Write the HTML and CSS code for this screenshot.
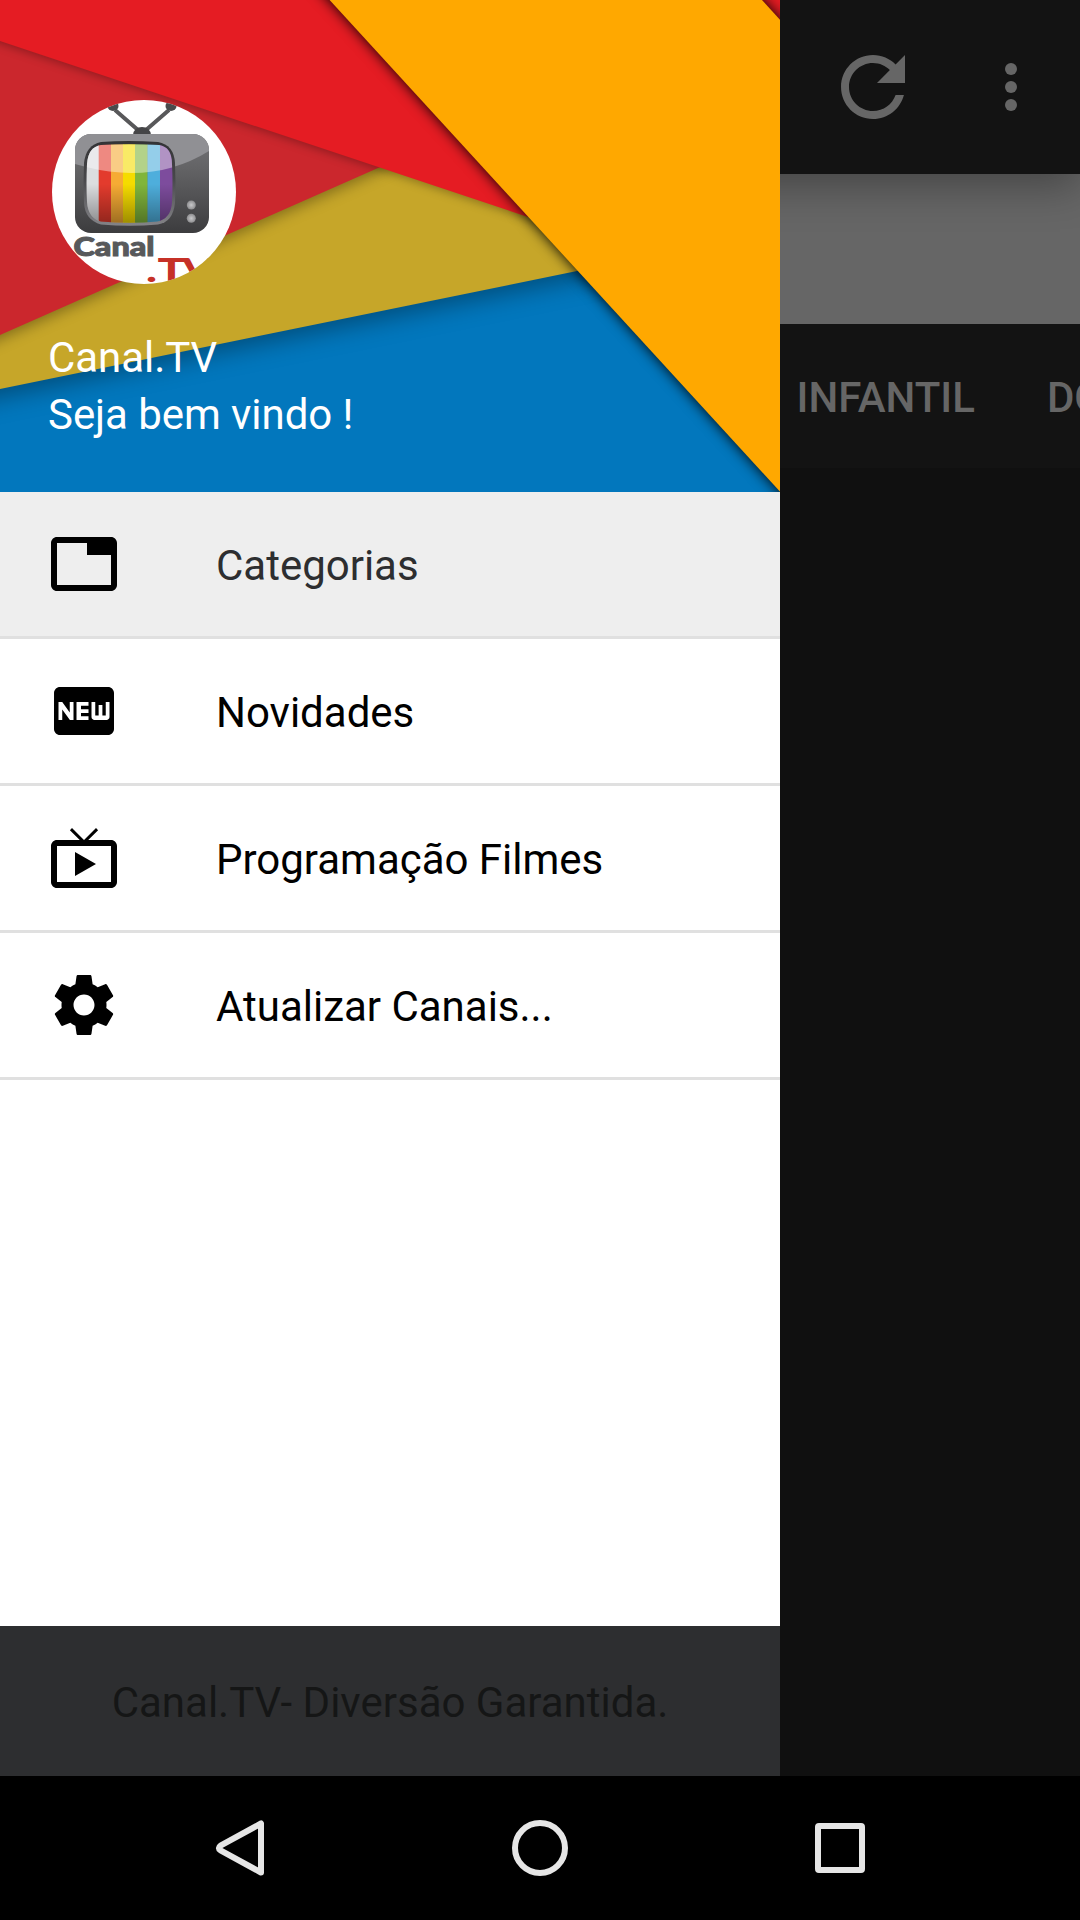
FILE: index.html
```html
<!DOCTYPE html>
<html lang="pt-BR">
<head>
<meta charset="utf-8">
<title>Canal.TV</title>
<link rel="stylesheet" href="styles.css">
</head>
<body>
<div class="screen">
  <div class="app">
    <nav class="drawer">
      <header class="drawer-header">
        <svg class="cover" viewBox="0 0 780 492" aria-hidden="true">
          <rect width="780" height="492" fill="#0277bd"/>
          <polygon class="fold-gold" points="-100,100 680,100 680,250 577,271 0,389 -100,409.5" fill="#c6a629"/>
          <polygon class="fold-crimson" points="-100,-100 600,-100 600,70 378,168 0,335 -100,379" fill="#cb272d"/>
          <polygon class="fold-red" points="-100,-100 900,-100 900,341 528,217 0,41 -100,8" fill="#e51c23"/>
          <polygon class="fold-orange" points="238,-100 671,-100 762,0 872,121 872,592" fill="#ffa800"/>
        </svg>
        <svg class="logo" viewBox="52 100 184 184" aria-hidden="true">
          <defs>
            <clipPath id="disc"><circle cx="144" cy="192" r="92"/></clipPath>
            <clipPath id="shell"><rect x="75" y="134" width="134" height="99" rx="16"/></clipPath>
            <clipPath id="glass"><path d="M101 145Q128 143.500 159 145Q172 147 172 164Q173 183 172 202Q171 219 157 221.500Q130 224 101 221.500Q88 218 87 202Q86 183 87 164Q88 147 101 145Z"/></clipPath>
            <linearGradient id="shellFill" x1="0" y1="0" x2="0" y2="1">
              <stop offset="0" stop-color="#747477"/><stop offset=".35" stop-color="#636365"/><stop offset="1" stop-color="#3c3c3e"/>
            </linearGradient>
            <linearGradient id="rim" x1="0" y1="0" x2="0" y2="1">
              <stop offset="0" stop-color="#333335"/><stop offset=".45" stop-color="#48484b"/><stop offset="1" stop-color="#848488"/>
            </linearGradient>
            <linearGradient id="shade" x1="0" y1="0" x2="0" y2="1">
              <stop offset=".5" stop-color="#000" stop-opacity="0"/><stop offset="1" stop-color="#000" stop-opacity=".38"/>
            </linearGradient>
            <radialGradient id="knob"><stop offset="0" stop-color="#c9c9cb"/><stop offset="1" stop-color="#8e8e90"/></radialGradient>
          </defs>
          <g clip-path="url(#disc)">
            <rect x="52" y="100" width="184" height="184" fill="#fff"/>
            <path d="M115 110L138 130M169 110L146 130" stroke="#58585a" stroke-width="4"/>
            <ellipse cx="113" cy="106" rx="5.500" ry="5" fill="#4a4a4c"/>
            <ellipse cx="171" cy="106" rx="5.500" ry="5" fill="#4a4a4c"/>
            <path d="M133 135Q134 127 142 127Q150 127 151 135Z" fill="#454547"/>
            <g clip-path="url(#shell)">
              <rect x="75" y="134" width="134" height="99" fill="url(#shellFill)"/>
              <path d="M75 134H209V151Q151 187 75 164Z" fill="#909094"/>
            </g>
            <path d="M101 142Q128 140 158 142Q174 145 175 163Q176 183 175 203Q173 222 158 224.500Q130 227 101 224.500Q85 220 84 203Q83 183 84 163Q86 145 101 142Z" fill="url(#rim)"/>
            <g clip-path="url(#glass)">
              <rect x="85" y="142" width="14" height="84" fill="#dcdddf"/>
              <rect x="98.700" y="142" width="12.500" height="84" fill="#e33b2d"/>
              <rect x="111" y="142" width="12.300" height="84" fill="#f6ab34"/>
              <rect x="123" y="142" width="12.300" height="84" fill="#f5dc00"/>
              <rect x="135" y="142" width="12.800" height="84" fill="#80b53b"/>
              <rect x="147.500" y="142" width="12.800" height="84" fill="#4eaedc"/>
              <rect x="160" y="142" width="14" height="84" fill="#7d4c9d"/>
              <rect x="85" y="142" width="90" height="84" fill="url(#shade)"/>
              <path d="M75 134H209V151Q151 187 75 164Z" fill="#fff" fill-opacity=".4"/>
            </g>
            <circle cx="191.300" cy="205" r="4.500" fill="url(#knob)"/>
            <circle cx="191.300" cy="218.300" r="4.500" fill="url(#knob)"/>
            <text class="logo-name" x="73.500" y="256" textLength="81" lengthAdjust="spacingAndGlyphs">Canal</text>
            <text class="logo-suffix" transform="scale(1.4 1)" x="104.300 112.600 130.200" y="282">.TV</text>
          </g>
        </svg>
        <div class="welcome">
          <p>Canal.TV</p>
          <p>Seja bem vindo !</p>
        </div>
      </header>
      <ul class="menu">
        <li class="item selected">
          <svg class="icon" viewBox="0 0 24 24"><path d="M21 3H3c-1.100 0-2 .9-2 2v14c0 1.100.9 2 2 2h18c1.100 0 2-.9 2-2V5c0-1.100-.9-2-2-2zm0 16H3V5h10v4h8v10z"/></svg>
          <span>Categorias</span>
        </li>
        <li class="item">
          <svg class="icon" viewBox="0 0 24 24"><path d="M20 4H4c-1.110 0-1.990.89-1.990 2L2 18c0 1.110.89 2 2 2h16c1.110 0 2-.89 2-2V6c0-1.110-.89-2-2-2zM8.500 15H7.300l-2.550-3.500V15H3.500V9h1.250l2.500 3.500V9H8.500v6zm5-4.740H11v1.120h2.500v1.260H11v1.110h2.500V15h-4V9h4v1.260zm7 3.740c0 .55-.45 1-1 1h-4c-.55 0-1-.45-1-1V9h1.250v4.510h1.130V9.990h1.250v3.510h1.120V9h1.250v5z"/></svg>
          <span>Novidades</span>
        </li>
        <li class="item">
          <svg class="icon" viewBox="0 0 24 24"><path d="M21 6h-7.590l3.290-3.290L16 2l-4 4-4-4-.7.710L10.590 6H3c-1.100 0-2 .89-2 2v12c0 1.100.9 2 2 2h18c1.100 0 2-.9 2-2V8c0-1.110-.9-2-2-2zm0 14H3V8h18v12zM9 10v8l7-4z"/></svg>
          <span>Programação Filmes</span>
        </li>
        <li class="item">
          <svg class="icon" viewBox="0 0 24 24"><path d="M19.430 12.980c.04-.32.070-.64.070-.98s-.03-.66-.07-.98l2.110-1.650c.19-.15.24-.42.12-.64l-2-3.460c-.12-.22-.39-.3-.61-.22l-2.490 1c-.52-.4-1.080-.73-1.690-.98l-.38-2.650C14.460 2.180 14.250 2 14 2h-4c-.25 0-.46.18-.49.42l-.38 2.650c-.61.25-1.170.59-1.690.98l-2.490-1c-.23-.09-.49 0-.61.22l-2 3.460c-.13.22-.07.49.12.64l2.110 1.650c-.04.32-.07.65-.07.98s.03.66.07.98l-2.110 1.650c-.19.15-.24.42-.12.64l2 3.460c.12.22.39.3.61.22l2.490-1c.52.4 1.080.73 1.690.98l.38 2.650c.03.24.24.42.49.42h4c.25 0 .46-.18.49-.42l.38-2.650c.61-.25 1.170-.59 1.690-.98l2.490 1c.23.09.49 0 .61-.22l2-3.460c.12-.22.07-.49-.12-.64l-2.110-1.650zM12 15.500c-1.930 0-3.500-1.570-3.500-3.500s1.570-3.500 3.500-3.500 3.500 1.570 3.500 3.500-1.570 3.500-3.500 3.500z"/></svg>
          <span>Atualizar Canais...</span>
        </li>
      </ul>
      <footer class="drawer-footer">Canal.TV- Diversão Garantida.</footer>
    </nav>
    <main class="content">
      <div class="toolbar">
        <svg class="refresh" viewBox="0 0 24 24"><path d="M17.650 6.350C16.200 4.900 14.210 4 12 4c-4.420 0-7.990 3.580-7.990 8s3.570 8 7.990 8c3.730 0 6.840-2.550 7.730-6h-2.080c-.82 2.330-3.040 4-5.650 4-3.310 0-6-2.690-6-6s2.690-6 6-6c1.660 0 3.140.69 4.220 1.780L13 11h7V4l-2.350 2.350z"/></svg>
        <svg class="more" viewBox="0 0 12 48"><circle cx="6" cy="6" r="6"/><circle cx="6" cy="24" r="6"/><circle cx="6" cy="42" r="6"/></svg>
      </div>
      <div class="banner"></div>
      <div class="tabs"><span>INFANTIL</span><span>DO</span></div>
    </main>
  </div>
  <div class="navbar">
    <svg viewBox="0 0 60 60"><path d="M51 5.500V54.500L10.500 32.300Q7.200 30 10.500 27.700Z"/></svg>
    <svg viewBox="0 0 60 60"><circle cx="30" cy="30" r="25"/></svg>
    <svg viewBox="0 0 60 60"><rect x="8" y="8" width="44" height="44" rx="1"/></svg>
  </div>
</div>
</body>
</html>
```
FILE: styles.css
```css
* { box-sizing: border-box; }
body, p, ul { margin: 0; padding: 0; }
body { background: #000; font-family: Roboto, sans-serif; font-size: 42px; }

.screen { width: 1080px; height: 1920px; display: flex; flex-direction: column; overflow: hidden; }
.app { flex: 1; display: flex; }

.drawer { width: 780px; background: #fff; display: flex; flex-direction: column; position: relative; z-index: 1; }
.drawer-header { position: relative; height: 492px; padding: 100px 48px 0; overflow: hidden; color: #fff; }
.cover { position: absolute; left: 0; top: 0; width: 780px; height: 492px; }
.fold-gold { filter: drop-shadow(0 8px 12px rgba(0, 0, 0, .34)); }
.fold-crimson { filter: drop-shadow(0 4px 7px rgba(0, 0, 0, .34)); }
.fold-red { filter: drop-shadow(0 2px 5px rgba(0, 0, 0, .3)); }
.fold-orange { filter: drop-shadow(0 0 7px rgba(0, 0, 0, 1)); }
.logo { position: relative; display: block; width: 184px; height: 184px; margin-left: 4px; }
.logo-name { font-family: Lato, sans-serif; font-weight: 900; font-size: 26px; fill: #58595b; stroke: #58595b; stroke-width: 1; }
.logo-suffix { font-family: Lato, sans-serif; font-weight: 900; font-size: 33px; fill: #c63127; }
.welcome { position: relative; margin-top: 45px; line-height: 57px; letter-spacing: -.06px; }

.menu { list-style: none; flex: 1; }
.item { height: 147px; padding: 0 48px; display: flex; align-items: center; gap: 96px; border-bottom: 3px solid #e0e0e0; color: #000; }
.item.selected { background: #eee; color: #2d2e30; }
.item span { padding-top: 2px; letter-spacing: -.01px; }
.icon { width: 72px; height: 72px; fill: #000; }
.drawer-footer { height: 150px; padding-top: 2px; display: flex; align-items: center; justify-content: center; background: #2d2e30; color: #151616; }

.content { flex: 1; min-width: 0; background: #101010; overflow: hidden; display: flex; flex-direction: column; }
.toolbar { height: 174px; margin-left: -100px; padding-right: 63px; display: flex; align-items: center; justify-content: flex-end; gap: 84px; background: #131313; fill: #666; box-shadow: 0 12px 40px rgba(0, 0, 0, .32); position: relative; }
.refresh { width: 96px; height: 96px; }
.more { width: 12px; height: 48px; }
.banner { height: 150px; background: #666; }
.tabs { height: 144px; padding: 2px 0 0 16.5px; display: flex; align-items: center; gap: 72px; background: #131313; color: #666; font-weight: 500; white-space: nowrap; position: relative; }

.navbar { height: 144px; display: flex; align-items: center; justify-content: center; gap: 240px; background: #000; }
.navbar svg { width: 60px; height: 60px; fill: none; stroke: #e6e6e6; stroke-width: 6; stroke-linejoin: round; }
```
